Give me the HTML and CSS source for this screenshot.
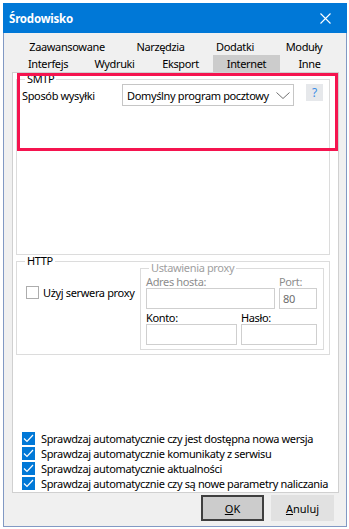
FILE: index.html
```html
<!DOCTYPE html>
<html lang="pl">
<head>
    <meta charset="UTF-8">
    <title>Środowisko</title>
    <link rel="stylesheet" href="styles.css">
</head>
<body>
    <div class="window">
        <div class="titlebar">
            <span class="title">Środowisko</span>
            <svg class="close" width="11" height="11" viewBox="0 0 11 11"><path d="M0.5 0.5 L10.5 10.5 M10.5 0.5 L0.5 10.5" stroke="#fff" stroke-width="1.1" fill="none"/></svg>
        </div>

        <div class="client">
            <div class="tabs">
                <div class="tab-row r1">
                    <span class="tab">Zaawansowane</span>
                    <span class="tab">Narzędzia</span>
                    <span class="tab">Dodatki</span>
                    <span class="tab">Moduły</span>
                </div>
                <div class="tab-row r2">
                    <span class="tab">Interfejs</span>
                    <span class="tab">Wydruki</span>
                    <span class="tab">Eksport</span>
                    <span class="tab active">Internet</span>
                    <span class="tab">Inne</span>
                </div>
            </div>

            <div class="page">
                <fieldset class="group smtp">
                    <legend>SMTP</legend>
                    <div class="smtp-row">
                        <span class="smtp-label">Sposób wysyłki</span>
                        <div class="combo">
                            <span>Domyślny program pocztowy</span>
                            <svg class="chevron" width="14" height="7" viewBox="0 0 14 7"><polyline points="0.5,0.5 7,6.5 13.5,0.5" stroke="#707070" stroke-width="1" fill="none"/></svg>
                        </div>
                        <span class="help">?</span>
                    </div>
                </fieldset>

                <fieldset class="group http">
                    <legend>HTTP</legend>
                    <div class="http-body">
                        <label class="proxy-check">
                            <span class="box"></span>
                            <span>Użyj serwera proxy</span>
                        </label>
                        <fieldset class="group proxy">
                            <legend>Ustawienia proxy</legend>
                            <div class="proxy-row">
                                <div class="field host">
                                    <span class="dim">Adres hosta:</span>
                                    <span class="input"></span>
                                </div>
                                <div class="field port">
                                    <span class="dim">Port:</span>
                                    <span class="input">80</span>
                                </div>
                            </div>
                            <div class="proxy-row second">
                                <div class="field account">
                                    <span>Konto:</span>
                                    <span class="input"></span>
                                </div>
                                <div class="field pass">
                                    <span>Hasło:</span>
                                    <span class="input"></span>
                                </div>
                            </div>
                        </fieldset>
                    </div>
                </fieldset>

                <div class="checks">
                    <label class="check"><span class="tick"><svg width="13" height="13" viewBox="0 0 13 13"><polyline points="2,6.5 5,9.5 11,3" stroke="#fff" stroke-width="1.2" fill="none"/></svg></span>Sprawdzaj automatycznie czy jest dostępna nowa wersja</label>
                    <label class="check"><span class="tick"><svg width="13" height="13" viewBox="0 0 13 13"><polyline points="2,6.5 5,9.5 11,3" stroke="#fff" stroke-width="1.2" fill="none"/></svg></span>Sprawdzaj automatycznie komunikaty z serwisu</label>
                    <label class="check"><span class="tick"><svg width="13" height="13" viewBox="0 0 13 13"><polyline points="2,6.5 5,9.5 11,3" stroke="#fff" stroke-width="1.2" fill="none"/></svg></span>Sprawdzaj automatycznie aktualności</label>
                    <label class="check"><span class="tick"><svg width="13" height="13" viewBox="0 0 13 13"><polyline points="2,6.5 5,9.5 11,3" stroke="#fff" stroke-width="1.2" fill="none"/></svg></span>Sprawdzaj automatycznie czy są nowe parametry naliczania</label>
                </div>
            </div>

            <div class="buttons">
                <button class="btn default"><u>O</u>K</button>
                <button class="btn"><u>A</u>nuluj</button>
            </div>
        </div>

        <div class="highlight"></div>
    </div>
</body>
</html>
```

FILE: styles.css
```css
body { margin: 0; background: #fff; font: 11px "Noto Sans", sans-serif; letter-spacing: -0.35px; color: #000; white-space: nowrap; }

.window { position: relative; margin: 3px; width: 344px; box-sizing: border-box; background: #f0f0f0; border: 1px solid #8199c4; border-top: 0; }
.titlebar { height: 30px; margin: 0 -1px; padding: 0 16px 0 6px; display: flex; align-items: center; justify-content: space-between; background: #0078d7; color: #fff; }
.title { font-weight: bold; font-size: 11.5px; letter-spacing: -0.2px; }

.client { padding: 5px 7px 5px 8px; }

.tab-row { display: grid; height: 17px; }
.r1 { grid-template-columns: 106px 81px 68px 1fr; margin-left: 2px; }
.r2 { grid-template-columns: 66px 67px 65px 67px 1fr; margin-left: 3px; }
.tab { text-align: center; line-height: 17px; }
.tab.active { background: #cccccc; }

.page { height: 421px; box-sizing: border-box; display: flex; flex-direction: column; padding: 0 8px 1px 3px; background: #fff; border: 1px solid #d0d0d0; }

fieldset.group { margin: 0; padding: 0; min-width: 0; box-sizing: border-box; border: 1px solid #dcdcdc; }
fieldset.group legend { margin-left: 8px; padding: 0 2px; line-height: 12px; }

.smtp { margin-top: 3px; height: 182px; }
.smtp-row { display: flex; align-items: center; margin-top: -1px; padding-left: 5px; }
.smtp-label { width: 100px; }
.combo { width: 172px; height: 22px; box-sizing: border-box; display: flex; align-items: center; padding: 0 3px 0 4px; border: 1px solid #c6c6c6; }
.chevron { margin-left: auto; }
.help { align-self: flex-start; width: 17px; height: 17px; margin-left: 12px; text-align: center; line-height: 17px; font-size: 12px; background: #e6e8eb; color: #3b8ee6; }

.http { height: 100px; }
.http-body { display: flex; margin-top: -5px; }
.proxy-check { flex: 0 0 114px; display: flex; align-items: center; gap: 4px; height: 13px; margin: 24px 0 0 9px; }
.box { flex-shrink: 0; width: 13px; height: 13px; box-sizing: border-box; border: 1px solid #adadad; }

.proxy { flex: 0 0 184px; height: 88px; border-color: #d6d6d6; }
.proxy legend { color: #a0a0a0; }
.proxy-row { display: flex; gap: 4px; padding-left: 5px; }
.proxy-row.second { margin-top: 1px; }
.field { display: flex; flex-direction: column; }
.field > span:first-child { line-height: 12px; margin: 2px 0 0; }
.dim { color: #8d8d8d; }
.input { height: 21px; box-sizing: border-box; border: 1px solid #cfcfcf; padding-left: 3px; line-height: 19px; color: #6d6d6d; }
.host .input { width: 129px; }
.port .input { width: 38px; }
.account .input { width: 91px; }
.pass .input { width: 76px; }

.checks { margin-top: auto; padding-left: 6px; }
.check { display: flex; align-items: center; gap: 6px; height: 15px; }
.tick { width: 13px; height: 13px; background: #0078d7; display: flex; }

.buttons { display: flex; justify-content: flex-end; gap: 7px; padding: 2px 5px 0 0; }
.btn { width: 63px; height: 26px; font: inherit; color: #000; background: #e1e1e1; border: 1px solid #e1e1e1; padding: 0; }
.btn.default { background: #cccccc; border: 2px solid #3f3f3f; }

.highlight { position: absolute; left: 13px; top: 70px; width: 321px; height: 78px; box-sizing: border-box; border: 3px solid #f5144f; }
```
